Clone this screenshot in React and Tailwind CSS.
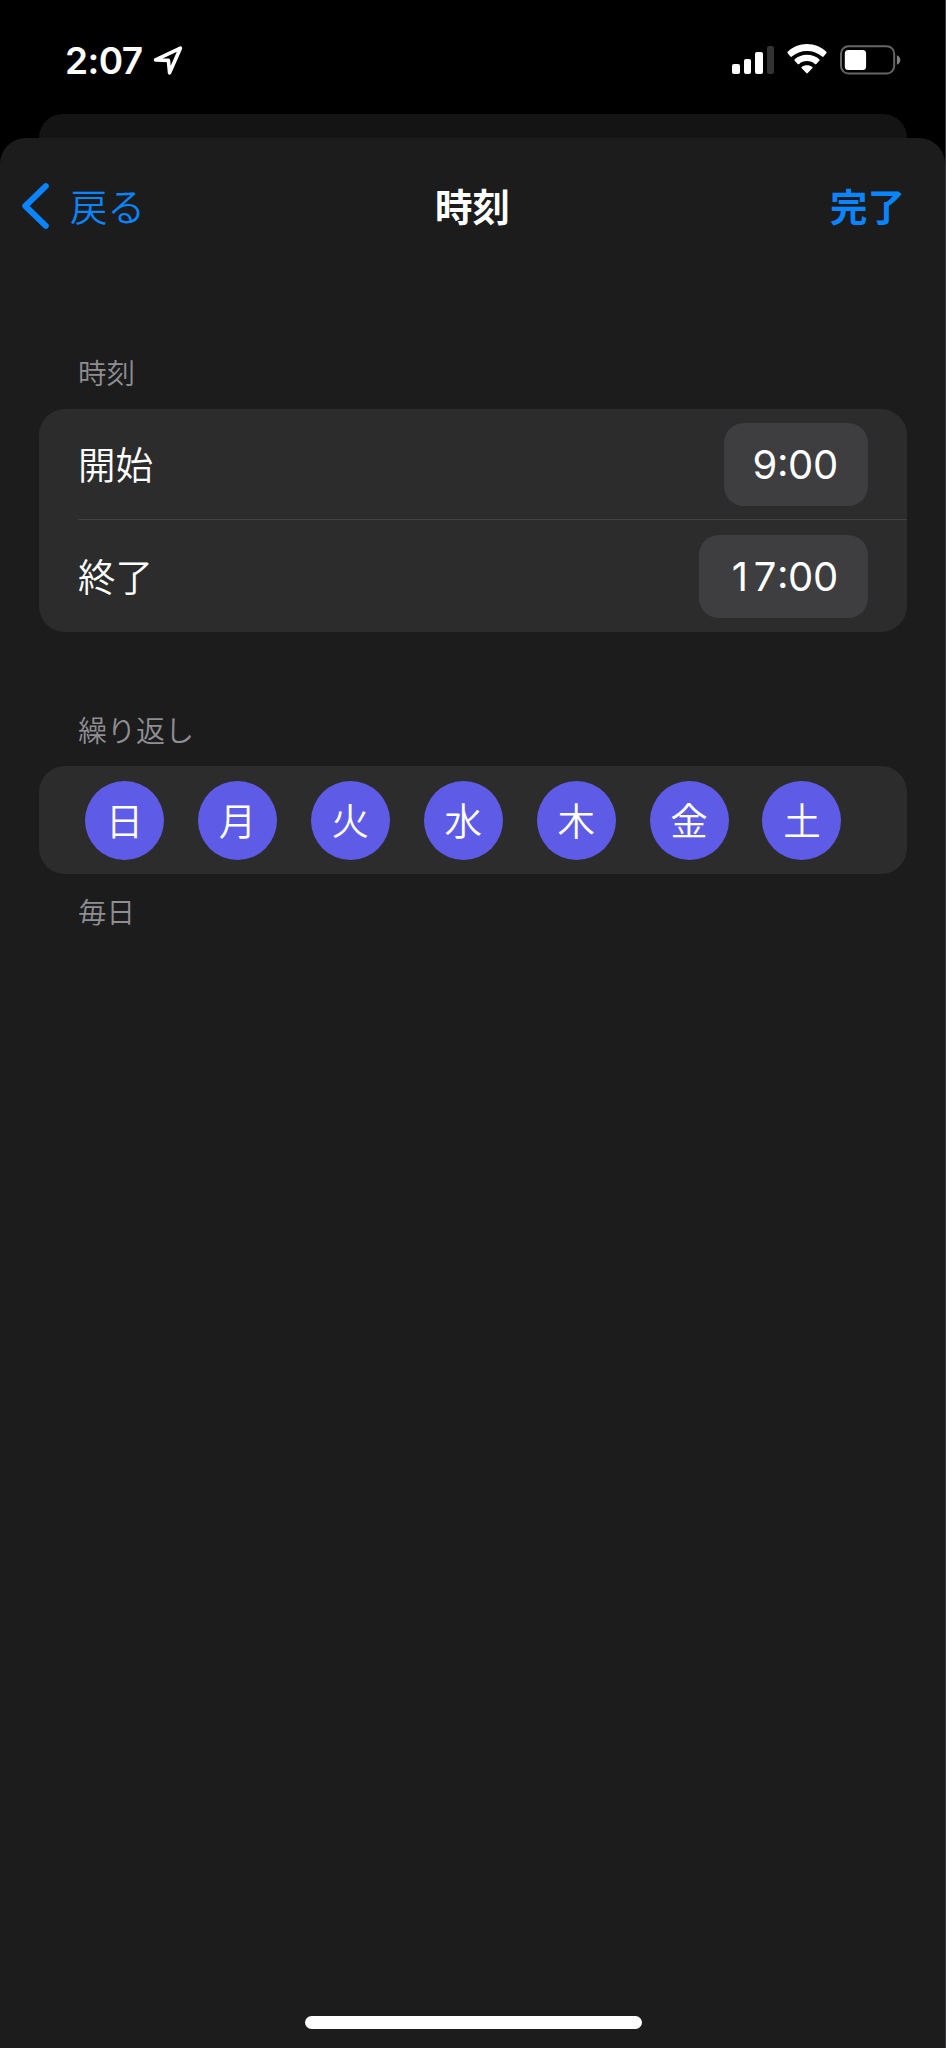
import React from 'react';

const DAYS = ['日', '月', '火', '水', '木', '金', '土'];

const StatusBar = () => (
  <div className="h-[114px] flex items-start justify-between pl-[65px] pr-[43px] flex-shrink-0">
    <div className="flex items-center pt-[39px] text-white">
      <span className="font-['Inter'] font-semibold text-[37px] leading-[44px] tracking-[-0.6px] w-[88px]">2:07</span>
      <svg className="w-[30px] h-[30px]" viewBox="0 0 30 30" fill="none">
        <path d="M2.6 13.9 L27.4 2.2 L16.6 26.8 L15.4 14.4 Z" stroke="currentColor" strokeWidth="3.6" strokeLinejoin="round" />
      </svg>
    </div>
    <div className="flex items-start pt-[44px]">
      <div className="flex items-end h-[30px] gap-[4px] mr-[13px]">
        <div className="w-[7.5px] h-[10px] rounded-[2px] bg-white" />
        <div className="w-[7.5px] h-[15px] rounded-[2px] bg-white" />
        <div className="w-[7.5px] h-[22px] rounded-[2px] bg-white" />
        <div className="w-[7.5px] h-[28px] rounded-[2px] bg-[#333333]" />
      </div>
      <svg className="w-[40px] h-[30px] mr-[13px]" viewBox="0 0 40 30" fill="#fff">
        <path d="M20 0 C27.5 0 34.4 3 39.3 7.8 Q40 8.6 39.3 9.3 L36.6 12.6 Q35.9 13.2 35.1 12.6 C31 9 25.8 7 20 7 C14.2 7 9 9 4.9 12.6 Q4.1 13.2 3.4 12.6 L0.7 9.3 Q0 8.6 0.7 7.8 C5.6 3 12.5 0 20 0 Z" />
        <path d="M20 10.8 C24.7 10.8 29 12.5 32.3 15.3 Q33 16 32.3 16.8 L29.3 19.9 Q28.6 20.5 27.8 19.9 C25.7 18.1 23 17.1 20 17.1 C17 17.1 14.3 18.1 12.2 19.9 Q11.4 20.5 10.7 19.9 L7.7 16.8 Q7 16 7.7 15.3 C11 12.5 15.3 10.8 20 10.8 Z" />
        <path d="M20 21.2 C22 21.2 23.9 21.8 25.3 22.9 Q26 23.6 25.3 24.3 L20.7 29.1 Q20 29.8 19.3 29.1 L14.7 24.3 Q14 23.6 14.7 22.9 C16.1 21.8 18 21.2 20 21.2 Z" />
      </svg>
      <svg className="w-[62px] h-[31px]" viewBox="0 0 62 31">
        <rect x="1" y="2.2" width="53.2" height="27.4" rx="7.5" fill="none" stroke="#666666" strokeWidth="2" />
        <rect x="4.8" y="6" width="21.3" height="20" rx="3.5" fill="#fff" />
        <path d="M56.9 11.3 C61.5 13 61.5 19.3 56.9 20.8 Z" fill="#808080" />
      </svg>
    </div>
  </div>
);

const NavBar = () => (
  <div className="h-[136px] grid grid-cols-3 items-center pl-[20px] pr-[20px] text-[37.5px] leading-[56px]">
    <button className="flex items-center text-[#0a84ff]">
      <svg className="w-[29px] h-[48px] mr-[21px]" viewBox="0 0 29 48" fill="none">
        <path d="M25.8 4.2 L5.3 24 L25.8 43.8" stroke="currentColor" strokeWidth="6" strokeLinecap="round" strokeLinejoin="round" />
      </svg>
      <span className="font-[350] pt-[3px]">戻る</span>
    </button>
    <h1 className="font-bold text-white text-center pt-[3px]">時刻</h1>
    <button className="font-bold text-[#0a84ff] text-right pt-[3px] pr-[20px]">完了</button>
  </div>
);

// every digit takes the same cell so the two times line up
const TimePill = ({ value }) => (
  <div className="h-[83px] pl-[29px] pr-[30px] pt-px flex items-center rounded-[20px] bg-[#3e3e40] font-['Inter'] text-[40px] leading-[48px] text-white">
    {value.split('').map((char, i) => (
      <span
        key={i}
        className={char === ':' ? 'w-[10.5px] flex justify-center pb-[7px]' : 'w-[25px] flex justify-center'}
      >
        {char}
      </span>
    ))}
  </div>
);

const TimeRow = ({ label, value }) => (
  <div className="flex items-center justify-between pr-[39px] h-[111px]">
    <span className="font-[350] text-[37.5px] leading-[56px] pt-[3px] text-white">{label}</span>
    <TimePill value={value} />
  </div>
);

const App = () => {
  return (
    <div lang="ja" className="w-[946px] h-[2048px] overflow-hidden bg-black border-r border-[#3a3a3c] flex flex-col font-['Inter','Noto_Sans_CJK_JP',sans-serif]">
      <StatusBar />
      <div className="h-[24px] ml-[39px] mr-[38px] rounded-t-[24px] bg-[#141414] flex-shrink-0" />
      <main className="flex-1 rounded-t-[26px] bg-[#1c1c1c] flex flex-col">
        <NavBar />

        <section className="pt-[78px] pl-[39px] pr-[38px]">
          <h2 className="pl-[39px] mb-[13px] font-[350] text-[28.5px] leading-[44px] text-[#8e8e93]">時刻</h2>
          <div className="h-[223px] rounded-[26px] bg-[#2c2c2c] pl-[39px]">
            <TimeRow label="開始" value="9:00" />
            <div className="h-px -mt-px mb-px bg-[#414143]" />
            <TimeRow label="終了" value="17:00" />
          </div>
        </section>

        <section className="pt-[78px] pl-[39px] pr-[38px]">
          <h2 className="pl-[39px] mb-[12px] font-[350] text-[29px] leading-[44px] text-[#8e8e93]">繰り返し</h2>
          <div className="h-[108px] rounded-[26px] bg-[#2c2c2c] flex items-center justify-between pl-[46px] pr-[65.5px]">
            {DAYS.map((day) => (
              <button
                key={day}
                className="w-[79px] h-[79px] pt-[3px] rounded-full bg-[#5e5ce6] flex items-center justify-center font-[350] text-[37.5px] leading-[56px] text-white"
              >
                {day}
              </button>
            ))}
          </div>
          <p className="pl-[39px] mt-[17px] font-[350] text-[28.5px] leading-[44px] text-[#8e8e93]">毎日</p>
        </section>

        <div className="mt-auto mb-[19px] ml-[305px] w-[337px] h-[13px] rounded-full bg-white" />
      </main>
    </div>
  );
};

export default App;
